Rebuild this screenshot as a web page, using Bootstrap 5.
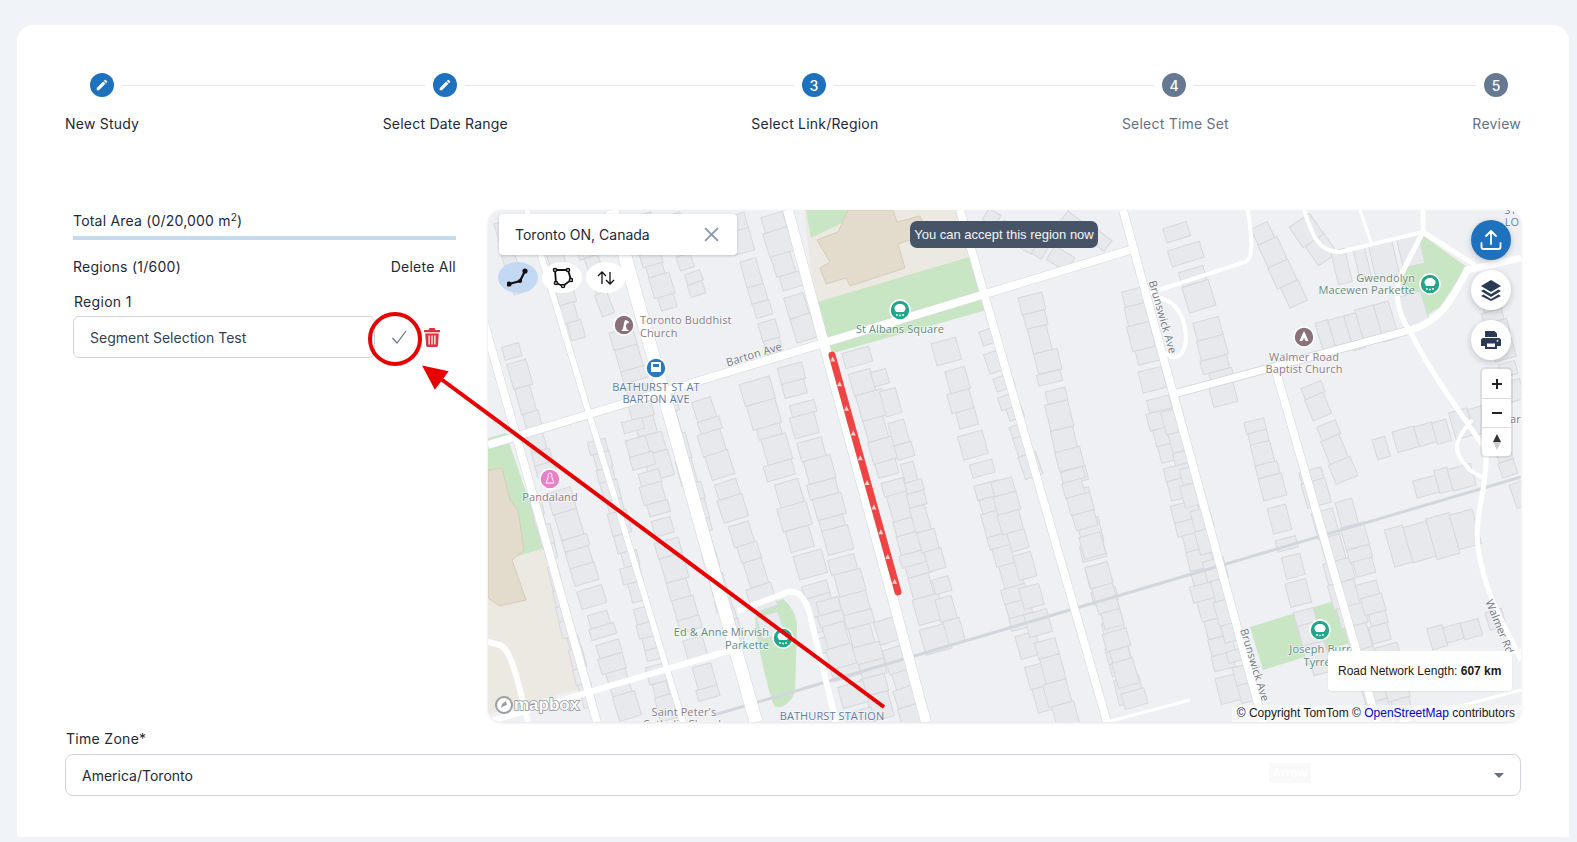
<!DOCTYPE html>
<html lang="en">
<head>
<meta charset="UTF-8">
<meta name="viewport" content="width=device-width, initial-scale=1.0">
<title>Select Link/Region</title>
<link rel="stylesheet" href="https://cdn.jsdelivr.net/npm/bootstrap@5.3.0/dist/css/bootstrap.min.css">
<style>
  html, body { height: 842px; overflow: hidden; }
  body { background: #f0f4f9; font-family: Inter, "Liberation Sans", sans-serif; font-size: 14px; color: #1d2939; padding: 25px 8px 0 17px; position: relative; }
  .study-card { background: #fff; border-radius: 16px 16px 0 0; height: 812px; padding: 48px 48px 0; }
  .step-row { height: 24px; padding: 0 13px 0 25px; }
  .step-dot { width: 24px; height: 24px; border-radius: 50%; background: #1e72bd; color: #fff; font-size: 14px; font-weight: 500; flex: none; }
  .step-dot.todo { background: #667892; }
  .step-line { height: 1px; background: #e4e7ec; margin: 0 8px; }
  .line-a { flex: 303 1 0; } .line-b { flex: 329 1 0; } .line-c { flex: 320 1 0; } .line-d { flex: 282 1 0; }
  .step-labels { margin-top: 16px; height: 20px; font-weight: 400; letter-spacing: .22px; }
  .step-labels .todo { color: #667085; }
  .work-row { margin-top: 77px; height: 512px; }
  .side-panel { width: 423px; flex: none; padding: 0 32px 0 8px; }
  .area-title { height: 20px; line-height: 20px; margin-top: 1px; font-weight: 400; letter-spacing: .2px; }
  .area-title sup { font-size: 10px; }
  .area-bar { height: 4px; margin-top: 5px; background: #c6daee; border-radius: 0; }
  .regions-head { margin-top: 16px; height: 20px; font-weight: 400; letter-spacing: .25px; }
  .region-name { margin-top: 15px; margin-left: 1px; height: 20px; font-weight: 400; letter-spacing: .3px; }
  .region-input { width: 302px; height: 42px; flex: none; font-size: 14px; padding: 0 16px; color: #344054; border-color: #d0d5dd; border-radius: 6px; letter-spacing: 0; }
  .region-row { margin-top: 5px; }
  .check-slot { width: 48px; }
  .trash-icon { margin-left: 1px; }
  .map-box { flex: 1 1 0; border-radius: 14px; overflow: hidden; background: #eef0f3; position: relative; box-shadow: 0 1px 3px rgba(16,24,40,.12); }
  .map-svg { display: block; width: 100%; height: 100%; }
  .map-svg text { font-family: "Open Sans", "Noto Sans", sans-serif; font-size: 11px; letter-spacing: .1px; paint-order: stroke; stroke: rgba(255,255,255,.7); stroke-width: 1.5px; }
  .poi-label { fill: #8a7a82; } .park-label { fill: #5f8a7a; } .stop-label { fill: #5c7ba3; } .road-label { fill: #6d7780; }
  .map-search { position: absolute; left: 11px; top: 4px; width: 238px; height: 41px; border-radius: 4px; box-shadow: 0 1px 3px rgba(16,24,40,.2); font-size: 14px; padding: 0 18px 0 16px; color: #1d2939; }
  .tool-row { position: absolute; left: 10px; top: 52px; }
  .tool-pill { width: 40px; height: 31px; border-radius: 50%; background: #fff; border: 0; padding: 0; }
  .tool-pill.on { background: #c3d9f3; }
  .map-hint { position: absolute; left: 422px; top: 11px; width: 188px; height: 27px; border-radius: 7px; background: #475467; color: #f2f4f7; font-size: 13px; font-weight: 500; font-family: "Liberation Sans", sans-serif; }
  .fab-col { position: absolute; left: 983px; top: 10px; gap: 10px; }
  .fab-btn { width: 40px; height: 40px; border-radius: 50%; background: #fff; border: 0; padding: 0; box-shadow: 0 2px 6px rgba(16,24,40,.22); }
  .fab-btn.main { background: #1e72bd; }
  .zoom-box { position: absolute; left: 994px; top: 159px; width: 29px; border-radius: 4px; background: #fff; box-shadow: 0 0 0 2px rgba(0,0,0,.08); }
  .zoom-box div { height: 29px; }
  .zoom-box div + div { border-top: 1px solid #ddd; }
  .net-length { position: absolute; left: 840px; top: 441px; width: 184px; height: 40px; border-radius: 4px; font-family: "Liberation Sans", sans-serif; font-size: 12px; color: #1a1a1a; padding-left: 10px; box-shadow: 0 1px 2px rgba(16,24,40,.06); }
  .map-credit { position: absolute; right: 0; bottom: 0; height: 17px; padding: 0 6px 0 5px; background: rgba(255,255,255,.55); font-family: "Liberation Sans", sans-serif; font-size: 12px; line-height: 17px; color: #1a1a1a; }
  .map-credit a { color: #0000c8; text-decoration: none; }
  .map-logo { position: absolute; left: 6px; bottom: 7px; }
  .tz-label { margin-top: 7px; margin-left: 1px; height: 20px; line-height: 20px; font-weight: 400; letter-spacing: .3px; }
  .tz-select-wrap { margin-top: 5px; position: relative; }
  .tz-select { height: 42px; font-size: 14px; color: #1d2939; border-color: #d0d5dd; border-radius: 8px; padding: 0 16px; background-image: none; }
  .tz-caret { position: absolute; right: 17px; top: 19px; width: 0; height: 0; border-left: 5px solid transparent; border-right: 5px solid transparent; border-top: 5px solid #667085; }
  .ghost-tag { position: absolute; left: 1204px; top: 9px; width: 42px; height: 20px; background: #f9f9f9; color: #fff; font-size: 12px; font-weight: 600; }
  .note-layer { position: absolute; left: 0; top: 0; width: 1577px; height: 842px; pointer-events: none; }
</style>
</head>
<body>
  <div class="study-card">
    <!-- stepper -->
    <div class="step-row d-flex align-items-center">
      <div class="step-dot d-flex align-items-center justify-content-center">
        <svg width="14" height="14" viewBox="0 0 24 24" fill="#fff"><path d="M3 17.25V21h3.75L17.81 9.94l-3.75-3.75L3 17.25zM20.71 7.04a.996.996 0 0 0 0-1.41l-2.34-2.34a.996.996 0 0 0-1.41 0l-1.83 1.83 3.75 3.75 1.83-1.83z"/></svg>
      </div>
      <div class="step-line line-a"></div>
      <div class="step-dot d-flex align-items-center justify-content-center">
        <svg width="14" height="14" viewBox="0 0 24 24" fill="#fff"><path d="M3 17.25V21h3.75L17.81 9.94l-3.75-3.75L3 17.25zM20.71 7.04a.996.996 0 0 0 0-1.41l-2.34-2.34a.996.996 0 0 0-1.41 0l-1.83 1.83 3.75 3.75 1.83-1.83z"/></svg>
      </div>
      <div class="step-line line-b"></div>
      <div class="step-dot d-flex align-items-center justify-content-center">3</div>
      <div class="step-line line-c"></div>
      <div class="step-dot todo d-flex align-items-center justify-content-center">4</div>
      <div class="step-line line-d"></div>
      <div class="step-dot todo d-flex align-items-center justify-content-center">5</div>
    </div>
    <div class="step-labels d-flex justify-content-between">
      <span>New Study</span>
      <span>Select Date Range</span>
      <span>Select Link/Region</span>
      <span class="todo">Select Time Set</span>
      <span class="todo">Review</span>
    </div>

    <div class="work-row d-flex">
      <div class="side-panel">
        <div class="area-title">Total Area (0/20,000 m<sup>2</sup>)</div>
        <div class="progress area-bar"></div>
        <div class="regions-head d-flex justify-content-between">
          <span>Regions (1/600)</span>
          <span>Delete All</span>
        </div>
        <div class="region-name">Region 1</div>
        <div class="region-row d-flex align-items-center">
          <input class="form-control region-input" type="text" value="Segment Selection Test">
          <div class="check-slot d-flex justify-content-center">
            <svg width="16" height="16" viewBox="0 0 16 16" fill="none" stroke="#667085" stroke-width="1.2"><path d="M1.5 9 6 14 15 2"/></svg>
          </div>
          <svg class="trash-icon" width="16" height="19" viewBox="0 0 16 19" fill="#d9343f"><path fill-rule="evenodd" d="M5.5 0h5l1 2H16v2.2H0V2h4.5zM1.2 5.4h13.6l-.9 12.2c-.1.8-.7 1.4-1.5 1.4H3.600c-.8 0-1.400-.6-1.500-1.400zM4.500 7.500v9h1.300v-9zM7.350 7.500v9h1.300v-9zM10.200 7.500v9h1.300v-9z"/></svg>
        </div>
      </div>

      <div class="map-box">
        <svg class="map-svg" viewBox="488 210 1033 512" id="mapSvg">
          <rect x="488" y="210" width="1033" height="512" fill="#eef0f3"/>
          <!-- land use -->
          <path d="M488 565 545 548 587 687 488 714z" fill="#ece9e2"/>
          <path d="M488 438 506 433 545 548 488 565z" fill="#c9e6c4"/>
          <path d="M804 210H958L970 258 815 303z" fill="#ece9e2"/>
          <path d="M806 210H848V220L811 238z" fill="#c9e6c4"/>
          <path d="M814 303 969 257 987 310 826 355z" fill="#c9e6c4"/>
          <path d="M1422 235 1467 267 1440 307 1415 323 1400 283z" fill="#c9e6c4"/>
          <path d="M1250 627 1337 600 1350 643 1263 670z" fill="#c9e6c4"/>
          <path d="M783 599C792 606 798 618 797 630L795 692C790 704 780 710 774 706 768 690 756 640 755 618 762 610 772 602 783 599z" fill="#c9e6c4"/>
          <!-- tan buildings -->
          <g fill="#e3dccd" stroke="#d6ccb9" stroke-width="1">
            <path d="M848 210H893L897 222 920 216 928 234 898 244 905 268 850 286 846 278 826 284 820 268 830 262 817 240 838 232z"/>
            <path d="M488 470 502 468 510 500 518 510 524 550 512 560 526 600 500 606 488 598z"/>
          </g>
          <g id="bldgs" fill="#e7e9ec" stroke="#d6d8dc" stroke-width="1"></g>
          <!-- rail -->
          <path d="M714 715 1521 477" stroke="#d3d7dd" stroke-width="3" fill="none"/>
          <!-- road casing + road -->
          <g id="roadGroup" fill="none" stroke-linecap="butt">
            <g stroke="#d3d6db">
              <path d="M612 210 756 722" stroke-width="14"/>
              <path d="M788 210 926 722" stroke-width="11"/>
              <path d="M960 210 1107 722" stroke-width="9"/>
              <path d="M1123 210 1263 722" stroke-width="9"/>
              <path d="M1275 368 1377 722" stroke-width="9"/>
              <path d="M527 210 683 722" stroke-width="7"/>
              <path d="M458 230 597 722" stroke-width="9"/>
              <path d="M488 445 1130 250" stroke-width="9"/>
              <path d="M1170 395 1410 330" stroke-width="9"/>
            </g>
            <g stroke="#fff">
              <path d="M612 210 756 722" stroke-width="13"/>
              <path d="M788 210 926 722" stroke-width="10"/>
              <path d="M960 210 1107 722" stroke-width="8"/>
              <path d="M1123 210 1263 722" stroke-width="8"/>
              <path d="M1275 368 1377 722" stroke-width="8"/>
              <path d="M527 210 683 722" stroke-width="6"/>
              <path d="M458 230 597 722" stroke-width="8"/>
              <path d="M488 445 1130 250" stroke-width="8"/>
              <path d="M1170 395 1410 330C1440 322 1452 300 1467 270L1521 258" stroke-width="7"/>
              <path d="M1150 293 1245 262C1254 258 1252 240 1248 210" stroke-width="4"/>
              <path d="M1304 210C1312 235 1318 252 1340 252L1423 232" stroke-width="4"/>
              <path d="M1360 210 1372 245" stroke-width="3"/>
              <path d="M1423 210V232L1475 265" stroke-width="5"/>
              <path d="M1423 232C1408 262 1396 280 1397 295 1398 312 1405 325 1412 335 1432 375 1462 415 1486 450 1488 490 1474 510 1478 548 1486 600 1508 630 1521 660" stroke-width="5"/>
              <path d="M1472 420C1455 440 1450 450 1470 470L1483 478" stroke-width="4"/>
              <path d="M1155 297C1178 300 1186 320 1186 340 1184 358 1172 362 1166 352" stroke-width="4"/>
              <path d="M1488 660 1521 650" stroke-width="3"/>
              <path d="M488 722 738 648" stroke-width="6"/>
              <path d="M738 611 788 592C800 590 806 600 810 615L836 722" stroke-width="6"/>
              <path d="M488 642 500 645C510 650 515 668 528 722" stroke-width="6"/>
              <path d="M1107 722 1190 700" stroke-width="3"/>
              <path d="M1400 722 1521 690" stroke-width="3"/>
            </g>
          </g>
          <!-- selected segment -->
          <path d="M832 355 898 592" stroke="#ef4444" stroke-width="7" stroke-linecap="round" fill="none"/>
          <g id="segMarks" fill="#fff" fill-opacity=".75"></g>
          <!-- POIs -->
          <g stroke="#fff" stroke-width="1.5">
            <circle cx="900" cy="310" r="10" fill="#23a58a"/>
            <circle cx="1430" cy="284" r="10" fill="#23a58a"/>
            <circle cx="1320" cy="630" r="10" fill="#23a58a"/>
            <circle cx="783" cy="638" r="10" fill="#23a58a"/>
            <circle cx="550" cy="479" r="10" fill="#e97fc4"/>
            <circle cx="624" cy="325" r="10" fill="#8a7078"/>
            <circle cx="1304" cy="337" r="10" fill="#8a7078"/>
            <circle cx="656" cy="368" r="10" fill="#2a78c0"/>
          </g>
          <defs>
            <g id="treeMark" fill="#fff">
              <path d="M-4 2-5.500-1C-6-4-3-6 0-6S6-4 5.500-1L4 2z"/>
              <circle cx="-3" cy="5" r=".9"/><circle cx="0" cy="5.500" r=".9"/><circle cx="3" cy="5" r=".9"/>
            </g>
          </defs>
          <use href="#treeMark" x="900" y="310"/><use href="#treeMark" x="1430" y="284"/><use href="#treeMark" x="1320" y="630"/><use href="#treeMark" x="783" y="638"/>
          <g fill="#fff">
            <path d="M1304 331l1.500 3 3 7h-3l-1.500-3-1.500 3h-3l3-7z"/>
            <path fill-rule="evenodd" d="M652 362h8a1 1 0 0 1 1 1v9h-10v-9a1 1 0 0 1 1-1zM653 364v3h6v-3z"/>
            <path d="M621 331c3-2 2-6 4-11 3 1 4 1 4 3-2 0-3 1-3 3 0 2 1 4 3 5z"/>
            <path d="M550 473a2 2 0 0 1 1.500 3.300l2.500 6.700h-8l2.500-6.700A2 2 0 0 1 550 473z" fill="none" stroke="#fff"/>
          </g>
          <!-- labels -->
          <text class="poi-label" x="640" y="324">Toronto Buddhist</text>
          <text class="poi-label" x="640" y="337">Church</text>
          <text class="stop-label" x="656" y="391" text-anchor="middle">BATHURST ST AT</text>
          <text class="stop-label" x="656" y="403" text-anchor="middle">BARTON AVE</text>
          <text class="road-label" transform="translate(755 358) rotate(-17)" text-anchor="middle">Barton Ave</text>
          <text class="park-label" x="900" y="333" text-anchor="middle">St Albans Square</text>
          <text class="poi-label" x="550" y="501" text-anchor="middle">Pandaland</text>
          <text class="park-label" x="1415" y="282" text-anchor="end">Gwendolyn</text>
          <text class="park-label" x="1415" y="294" text-anchor="end">Macewen Parkette</text>
          <text class="poi-label" x="1304" y="361" text-anchor="middle">Walmer Road</text>
          <text class="poi-label" x="1304" y="373" text-anchor="middle">Baptist Church</text>
          <text class="road-label" transform="translate(1159 318) rotate(74)" text-anchor="middle">Brunswick Ave</text>
          <text class="road-label" transform="translate(1251 666) rotate(73)" text-anchor="middle">Brunswick Ave</text>
          <text class="park-label" x="769" y="636" text-anchor="end">Ed &amp; Anne Mirvish</text>
          <text class="park-label" x="769" y="649" text-anchor="end">Parkette</text>
          <text class="poi-label" x="684" y="716" text-anchor="middle">Saint Peter's</text>
          <text class="poi-label" x="684" y="728" text-anchor="middle">Catholic Church</text>
          <text class="stop-label" x="832" y="720" text-anchor="middle">BATHURST STATION</text>
          <text class="park-label" x="1320" y="653" text-anchor="middle">Joseph Burr</text>
          <text class="park-label" x="1320" y="666" text-anchor="middle">Tyrrell</text>
          <text class="road-label" transform="translate(1496 628) rotate(68)" text-anchor="middle">Walmer Rd</text>
          <text class="stop-label" x="1512" y="214" text-anchor="middle">ST.</text>
          <text class="stop-label" x="1512" y="226" text-anchor="middle">LO</text>
          <text class="poi-label" x="1510" y="423">ar</text>
        </svg>

        <div class="map-logo d-flex align-items-center">
          <svg width="90" height="20" viewBox="0 0 90 20">
            <circle cx="10" cy="10" r="8" fill="#fff" stroke="#9a9da3" stroke-width="2"/>
            <path d="M7 13l1-4 4-3 1 4-3 1z" fill="#9a9da3"/>
            <text x="20" y="15" style="font:700 17px 'Liberation Sans',sans-serif;paint-order:stroke;stroke:#8f9298;stroke-width:1.500px;fill:#fff">mapbox</text>
          </svg>
        </div>

        <div class="map-search bg-white d-flex align-items-center justify-content-between">
          <span>Toronto ON, Canada</span>
          <svg width="15" height="15" viewBox="0 0 14 14" stroke="#8a9bb0" stroke-width="1.800"><path d="M1 1 13 13M13 1 1 13"/></svg>
        </div>

        <div class="tool-row d-flex gap-1">
          <button class="tool-pill on d-flex align-items-center justify-content-center">
            <svg width="22" height="20" viewBox="0 0 22 20" fill="#111" stroke="#111" stroke-width="2.200"><path d="M2 16 13 13 18 3" fill="none"/><circle cx="2" cy="16" r="1.500"/><circle cx="13" cy="13" r="1"/><circle cx="18" cy="3" r="1.500"/></svg>
          </button>
          <button class="tool-pill d-flex align-items-center justify-content-center">
            <svg width="22" height="22" viewBox="0 0 22 22" fill="#fff" stroke="#111" stroke-width="1.500"><path d="M4 3H17L20 13 12 19 5 16z" fill="none" stroke-width="1.800"/><circle cx="4" cy="3" r="1.600"/><circle cx="17" cy="3" r="1.600"/><circle cx="20" cy="13" r="1.600"/><circle cx="12" cy="19" r="1.600"/><circle cx="5" cy="16" r="1.600"/></svg>
          </button>
          <button class="tool-pill d-flex align-items-center justify-content-center">
            <svg width="20" height="16" viewBox="0 0 20 16" fill="none" stroke="#111" stroke-width="1.300"><path d="M6 14V2M2 6 6 2 10 6M14 2V14M10 10 14 14 18 10"/></svg>
          </button>
        </div>

        <div class="map-hint d-flex align-items-center justify-content-center">You can accept this region now</div>

        <div class="fab-col d-flex flex-column">
          <button class="fab-btn main d-flex align-items-center justify-content-center">
            <svg width="22" height="22" viewBox="0 0 22 22" fill="none" stroke="#fff" stroke-width="1.800" stroke-linecap="round" stroke-linejoin="round"><path d="M11 15V2M6 7 11 2 16 7M1.500 14v4a2 2 0 0 0 2 2h15a2 2 0 0 0 2-2v-4"/></svg>
          </button>
          <button class="fab-btn d-flex align-items-center justify-content-center">
            <svg width="22" height="22" viewBox="0 0 22 22" fill="#2b3a55"><path d="M11 1 21 7 11 13 1 7z"/><path d="M3.500 10.500 11 15l7.500-4.500L21 12l-10 6L1 12z"/><path d="M3.500 15.500 11 20l7.500-4.500L21 17l-10 5L1 17z"/></svg>
          </button>
          <button class="fab-btn d-flex align-items-center justify-content-center">
            <svg width="20" height="20" viewBox="0 0 20 20" fill="#2b3a55"><path fill-rule="evenodd" d="M4 1h9.500L16 3.500V7H4zM2.500 8h15A2.500 2.500 0 0 1 20 10.500V16h-4v3H4v-3H0v-5.500A2.500 2.500 0 0 1 2.500 8zM6 13.500V17h8v-3.500z"/><circle cx="16.500" cy="10.800" r=".9" fill="#fff"/></svg>
          </button>
        </div>

        <div class="zoom-box d-flex flex-column">
          <div class="d-flex align-items-center justify-content-center">
            <svg width="12" height="12" viewBox="0 0 12 12" fill="#222"><path d="M5 1h2v4h4v2H7v4H5V7H1V5h4z"/></svg>
          </div>
          <div class="d-flex align-items-center justify-content-center">
            <svg width="12" height="12" viewBox="0 0 12 12" fill="#222"><path d="M1 5h10v2H1z"/></svg>
          </div>
          <div class="d-flex align-items-center justify-content-center">
            <svg width="10" height="18" viewBox="0 0 10 18"><path d="M5 1 9 9H1z" fill="#333"/><path d="M5 17 1 9H9z" fill="#ccc"/></svg>
          </div>
        </div>

        <div class="net-length bg-white d-flex align-items-center"><span>Road Network Length: <b>607 km</b></span></div>
        <div class="map-credit">© Copyright TomTom © <a href="#">OpenStreetMap</a> contributors</div>
      </div>
    </div>

    <div class="tz-label">Time Zone*</div>
    <div class="tz-select-wrap">
      <select class="form-select tz-select"><option>America/Toronto</option></select>
      <span class="tz-caret"></span>
      <span class="ghost-tag d-flex align-items-center justify-content-center">Arrow</span>
    </div>
  </div>

  <!-- red annotation drawn on top of the screenshot -->
  <svg class="note-layer" viewBox="0 0 1577 842">
    <circle cx="395" cy="339" r="25" fill="none" stroke="#e60000" stroke-width="4"/>
    <path d="M441 379 884 707" stroke="#e60000" stroke-width="4"/>
    <path d="M424 367 435 388 447 372z" fill="#e60000" stroke="#e60000" stroke-width="2"/>
  </svg>

  <script>
    // building rows: x0, y0, x1, y1, depth
    const rows = [
      [500,222,520,290,18],[510,345,545,470,20],[545,225,575,330,18],[575,220,605,300,16],
      [640,215,665,300,22],[670,215,700,300,18],[620,330,660,470,26],[560,490,625,705,26],[535,500,585,690,14],
      [598,440,665,700,20],[632,420,708,690,26],[665,390,735,640,18],
      [700,400,770,620,26],[735,215,770,340,22],[770,215,805,330,26],
      [755,380,830,640,32],[790,365,880,700,30],[825,600,860,722,30],
      [855,350,940,650,28],[882,620,915,722,24],[880,370,950,620,18],
      [945,340,1045,700,26],[985,330,1030,460,20],[1000,480,1065,720,24],
      [1030,295,1130,700,26],[985,215,1060,260,18],[1065,215,1110,250,18],
      [1070,470,1135,700,26],[1130,290,1232,690,28],[1170,410,1250,700,22],
      [1175,225,1195,290,34],[1205,320,1225,395,28],[1260,225,1290,290,24],[1300,220,1320,250,30],
      [1255,420,1320,670,24],[1310,470,1380,720,28],[1345,500,1400,700,24],[1310,385,1345,470,24],
      [1335,270,1420,250,40],[1320,340,1405,315,40],[1375,450,1480,420,28],[1390,550,1460,530,44],
      [1415,490,1470,475,24],[1490,300,1515,390,22],[1430,640,1500,620,22],[1500,440,1521,500,20]
    ];
    let seed = 7;
    function rnd() { seed = (seed * 9301 + 49297) % 233280; return seed / 233280; }
    const NS = "http://www.w3.org/2000/svg";
    const bldgs = document.getElementById("bldgs");
    rows.forEach(r => {
      const dx = r[2] - r[0], dy = r[3] - r[1], len = Math.hypot(dx, dy);
      const ang = Math.atan2(dy, dx) * 180 / Math.PI;
      let s = 0;
      while (s < len) {
        const l = 11 + rnd() * 16;
        const d = r[4] * (.72 + rnd() * .28);
        const x = r[0] + dx * s / len, y = r[1] + dy * s / len;
        const off = rnd() * 4 - 2;
        const el = document.createElementNS(NS, "rect");
        el.setAttribute("x", 0); el.setAttribute("y", -d / 2 + off);
        el.setAttribute("width", l.toFixed(1)); el.setAttribute("height", d.toFixed(1));
        el.setAttribute("transform", "translate(" + x.toFixed(1) + " " + y.toFixed(1) + ") rotate(" + ang.toFixed(1) + ")");
        bldgs.appendChild(el);
        s += l + (rnd() < .25 ? 4 + rnd() * 5 : 0);
      }
    });
    // small white arrows on the selected segment
    const marks = document.getElementById("segMarks");
    for (let i = 0; i < 10; i++) {
      const t = (i + .1) / 9.6, x = 832 + 66 * t, y = 357 + 237 * t;
      const p = document.createElementNS(NS, "path");
      p.setAttribute("d", "M" + x + " " + (y - 3) + "l2.500 5h-5z");
      marks.appendChild(p);
    }
  </script>
  <script src="https://cdn.jsdelivr.net/npm/bootstrap@5.3.0/dist/js/bootstrap.bundle.min.js"></script>
</body>
</html>
